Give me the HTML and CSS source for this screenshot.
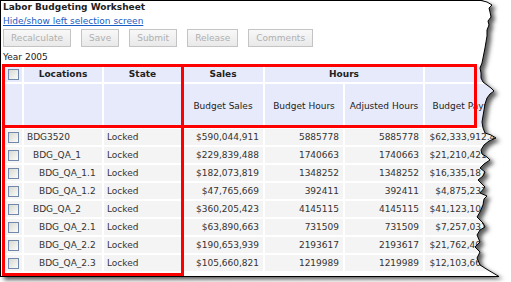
FILE: index.html
```html
<!DOCTYPE html>
<html>
<head>
    <meta charset="UTF-8">
    <title>Labor Budgeting Worksheet</title>
    <link rel="stylesheet" href="styles.css">
</head>
<body>
<div class="sheet">
    <div class="paper">
        <h1 class="title">Labor Budgeting Worksheet</h1>
        <a class="toggle" href="javascript:;">Hide/show left selection screen</a>
        <div class="toolbar">
            <button disabled>Recalculate</button>
            <button disabled>Save</button>
            <button disabled>Submit</button>
            <button disabled>Release</button>
            <button disabled>Comments</button>
        </div>
        <div class="year">Year 2005</div>
        <table class="grid">
            <colgroup>
                <col class="c-chk"><col class="c-loc"><col class="c-state">
                <col class="c-sales"><col class="c-hrs"><col class="c-hrs"><col class="c-pay">
            </colgroup>
            <thead>
                <tr class="group">
                    <th class="chk"><span class="box"></span></th>
                    <th>Locations</th>
                    <th>State</th>
                    <th>Sales</th>
                    <th colspan="2">Hours</th>
                    <th></th>
                </tr>
                <tr class="sub">
                    <th class="chk"></th>
                    <th></th>
                    <th></th>
                    <th>Budget Sales</th>
                    <th>Budget Hours</th>
                    <th>Adjusted Hours</th>
                    <th>Budget Payroll</th>
                </tr>
            </thead>
            <tbody>
                <tr>
                    <td class="chk"><span class="box"></span></td>
                    <td>BDG3520</td><td>Locked</td>
                    <td class="num">$590,044,911</td><td class="num">5885778</td><td class="num">5885778</td><td class="num">$62,333,912.40</td>
                </tr>
                <tr>
                    <td class="chk"><span class="box"></span></td>
                    <td class="lvl1">BDG_QA_1</td><td>Locked</td>
                    <td class="num">$229,839,488</td><td class="num">1740663</td><td class="num">1740663</td><td class="num">$21,210,421.15</td>
                </tr>
                <tr>
                    <td class="chk"><span class="box"></span></td>
                    <td class="lvl2">BDG_QA_1.1</td><td>Locked</td>
                    <td class="num">$182,073,819</td><td class="num">1348252</td><td class="num">1348252</td><td class="num">$16,335,187.60</td>
                </tr>
                <tr>
                    <td class="chk"><span class="box"></span></td>
                    <td class="lvl2">BDG_QA_1.2</td><td>Locked</td>
                    <td class="num">$47,765,669</td><td class="num">392411</td><td class="num">392411</td><td class="num">$4,875,233.55</td>
                </tr>
                <tr>
                    <td class="chk"><span class="box"></span></td>
                    <td class="lvl1">BDG_QA_2</td><td>Locked</td>
                    <td class="num">$360,205,423</td><td class="num">4145115</td><td class="num">4145115</td><td class="num">$41,123,108.25</td>
                </tr>
                <tr>
                    <td class="chk"><span class="box"></span></td>
                    <td class="lvl2">BDG_QA_2.1</td><td>Locked</td>
                    <td class="num">$63,890,663</td><td class="num">731509</td><td class="num">731509</td><td class="num">$7,257,031.90</td>
                </tr>
                <tr>
                    <td class="chk"><span class="box"></span></td>
                    <td class="lvl2">BDG_QA_2.2</td><td>Locked</td>
                    <td class="num">$190,653,939</td><td class="num">2193617</td><td class="num">2193617</td><td class="num">$21,762,409.70</td>
                </tr>
                <tr>
                    <td class="chk"><span class="box"></span></td>
                    <td class="lvl2">BDG_QA_2.3</td><td>Locked</td>
                    <td class="num">$105,660,821</td><td class="num">1219989</td><td class="num">1219989</td><td class="num">$12,103,668.30</td>
                </tr>
            </tbody>
        </table>
    </div>

    <!-- red highlight frames drawn over the grid -->
    <div class="mark mark-head"></div>
    <div class="mark mark-cols"></div>
    <div class="mark mark-rows"></div>

    <!-- torn right / bottom edge of the clipping -->
    <svg class="tear" width="511" height="282" viewBox="0 0 511 282">
        <defs>
            <clipPath id="outside">
                <path clip-rule="evenodd" d="M0 0H511V282H0Z M0 0H481L487 2L492 5L489 8L490 12L491 17L488 21L489 25L487 30L487 36L486 42L485 48L484 53L483 58L482 63L480 68L481 73L481 78L483 82L487 85L491 88L494 91L490 94L487 98L485 104L484 110L483 116L482 122L483 128L485 133L491 135L496 138L489 141L484 145L481 150L482 154L487 157L490 160L484 164L480 168L485 172L483 176L478 180L485 187L480 193L487 196L484 199L483 205L480 212L477 217L483 223L485 227L480 230L477 235L480 242L475 247L480 252L477 258L480 265L488 270L499 276L0 277Z"/>
            </clipPath>
            <filter id="soft" x="-10%" y="-10%" width="130%" height="130%">
                <feGaussianBlur stdDeviation="2"/>
            </filter>
        </defs>
        <g clip-path="url(#outside)">
            <rect width="511" height="282" fill="#fff"/>
            <path transform="translate(4 3)" fill="#5a5a5a" filter="url(#soft)" d="M0 0H481L487 2L492 5L489 8L490 12L491 17L488 21L489 25L487 30L487 36L486 42L485 48L484 53L483 58L482 63L480 68L481 73L481 78L483 82L487 85L491 88L494 91L490 94L487 98L485 104L484 110L483 116L482 122L483 128L485 133L491 135L496 138L489 141L484 145L481 150L482 154L487 157L490 160L484 164L480 168L485 172L483 176L478 180L485 187L480 193L487 196L484 199L483 205L480 212L477 217L483 223L485 227L480 230L477 235L480 242L475 247L480 252L477 258L480 265L488 270L499 276L0 277Z"/>
        </g>
        <path fill="none" stroke="#000" stroke-width="1" d="M481 0.5L487 2L492 5L489 8L490 12L491 17L488 21L489 25L487 30L487 36L486 42L485 48L484 53L483 58L482 63L480 68L481 73L481 78L483 82L487 85L491 88L494 91L490 94L487 98L485 104L484 110L483 116L482 122L483 128L485 133L491 135L496 138L489 141L484 145L481 150L482 154L487 157L490 160L484 164L480 168L485 172L483 176L478 180L485 187L480 193L487 196L484 199L483 205L480 212L477 217L483 223L485 227L480 230L477 235L480 242L475 247L480 252L477 258L480 265L488 270L499 276.5L0 276.5"/>
    </svg>
</div>
</body>
</html>
```

FILE: styles.css
```css
* {
    margin: 0;
    padding: 0;
    box-sizing: border-box;
}
body {
    font-family: "DejaVu Sans", Verdana, sans-serif;
    font-size: 9px;
    color: #222;
    background: #fff;
}
.sheet {
    position: relative;
    width: 511px;
    height: 282px;
    overflow: hidden;
}
.paper {
    height: 277px;
    border-top: 1px solid #000;
    border-left: 1px solid #000;
    padding-left: 2px;
}
.title {
    font-size: 9px;
    font-weight: bold;
    line-height: 12px;
    color: #222;
}
.toggle {
    display: block;
    width: max-content;
    margin-top: 2px;
    line-height: 12px;
    color: #1a5bc4;
    text-decoration: underline;
}
.toolbar {
    display: flex;
    gap: 10px;
    margin-top: 2px;
}
.toolbar button {
    font: inherit;
    height: 18px;
    padding: 0 7px;
    border: 1px solid #c4c4c4;
    background: linear-gradient(#f8f8f8, #e9e9e9);
    color: #b0b0b0;
}
.year {
    margin-top: 4px;
    line-height: 12px;
}

.grid {
    margin: 1px 0 0 -1px;
    width: 505px;
    table-layout: fixed;
    border-collapse: separate;
    border-spacing: 2px;
}
.c-chk { width: 18px; }
.c-loc { width: 78px; }
.c-state { width: 77px; }
.c-sales { width: 80px; }
.c-hrs { width: 78px; }
.c-pay { width: 80px; }

.grid th, .grid td {
    padding: 0 3px;
    white-space: nowrap;
    overflow: hidden;
    vertical-align: middle;
}
.grid thead th {
    background: #e7eafb;
    text-align: center;
    font-weight: normal;
    color: #222;
}
.group th { height: 16px; font-weight: bold !important; }
.sub th { height: 43px; }
.grid tbody td {
    height: 16px;
    background: #f4f4f4;
    color: #333;
    text-align: left;
}
.grid td.num {
    text-align: right;
    padding-right: 4px;
}
.grid .chk {
    padding: 0;
    text-align: center;
}
.grid td.lvl1 { padding-left: 9px; }
.grid td.lvl2 { padding-left: 15px; }

.box {
    display: inline-block;
    width: 11px;
    height: 11px;
    vertical-align: middle;
    border: 1px solid #6f88ac;
    background: linear-gradient(135deg, #d9d9d2, #fbfbf9);
}

.mark {
    position: absolute;
    border: 3px solid #f00;
}
.mark-head { left: 2px; top: 64px; width: 182px; height: 64px; }
.mark-cols { left: 181px; top: 64px; width: 296px; height: 64px; }
.mark-rows { left: 2px; top: 125px; width: 182px; height: 151px; }

.tear {
    position: absolute;
    left: 0;
    top: 0;
}
```
